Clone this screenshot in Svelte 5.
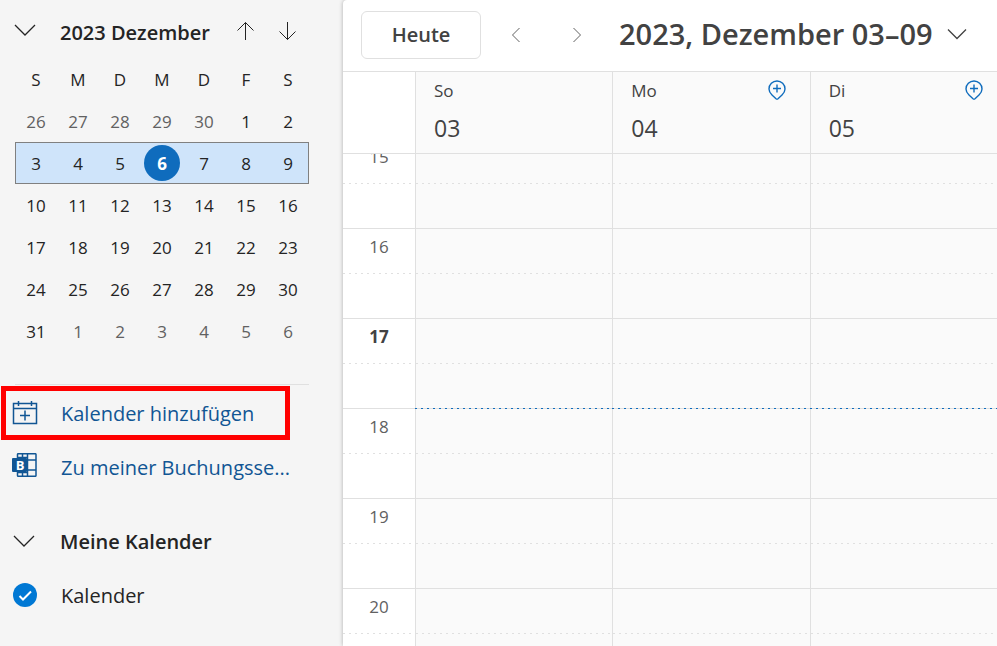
<script lang="ts">
	const weekdays = ['S', 'M', 'D', 'M', 'D', 'F', 'S'];
	const weeks = [
		[26, 27, 28, 29, 30, 1, 2],
		[3, 4, 5, 6, 7, 8, 9],
		[10, 11, 12, 13, 14, 15, 16],
		[17, 18, 19, 20, 21, 22, 23],
		[24, 25, 26, 27, 28, 29, 30],
		[31, 1, 2, 3, 4, 5, 6]
	];
	const selectedWeek = 1;
	const today = 6;

	const days = [
		{ name: 'So', date: '03', pin: false },
		{ name: 'Mo', date: '04', pin: true },
		{ name: 'Di', date: '05', pin: true }
	];
	const hours = [15, 16, 17, 18, 19, 20];
	const currentHour = 17;

	let calendarVisible = $state(true);

	function isOutside(week: number, day: number): boolean {
		return (week === 0 && day > 20) || (week === weeks.length - 1 && day < 10);
	}
</script>

{#snippet chevron()}
	<svg class="chevron" width="22" height="12" viewBox="0 0 22 12" aria-hidden="true">
		<path d="M1 1l10 10L21 1" />
	</svg>
{/snippet}

<div class="app">
	<aside class="sidebar">
		<div class="monthHeader">
			<button class="collapse" aria-label="Monat ausblenden">{@render chevron()}</button>
			<button class="monthName">2023 Dezember</button>
			<button class="step" aria-label="Vorheriger Monat">
				<svg width="18" height="20" viewBox="0 0 18 20" aria-hidden="true">
					<path d="M8.500 19V1.500M.5 9.500l8-8 8 8" />
				</svg>
			</button>
			<button class="step" aria-label="Nächster Monat">
				<svg width="18" height="20" viewBox="0 0 18 20" aria-hidden="true">
					<path d="M8.500 1v17.500M.5 10.500l8 8 8-8" />
				</svg>
			</button>
		</div>

		<table class="month">
			<thead>
				<tr>
					{#each weekdays as weekday}
						<th scope="col">{weekday}</th>
					{/each}
				</tr>
			</thead>
			<tbody>
				{#each weeks as week, w}
					<tr class:selected={w === selectedWeek}>
						{#each week as day}
							<td>
								<button
									class="day"
									class:outside={isOutside(w, day)}
									class:today={w === selectedWeek && day === today}>{day}</button
								>
							</td>
						{/each}
					</tr>
				{/each}
			</tbody>
		</table>

		<nav class="links">
			<a class="row link highlighted" href="#add">
				<svg width="26" height="24" viewBox="0 0 26 24" aria-hidden="true">
					<path d="M1.500 2.500h23v20h-23zM1.500 7.500h23M6.500 0v5M19.500 0v5M13 9.500v10M8 14.500h10" />
				</svg>
				<span>Kalender hinzufügen</span>
			</a>
			<a class="row link" href="#bookings">
				<svg class="bookings" width="26" height="24" viewBox="0 0 26 24" aria-hidden="true">
					<path
						d="M5.500 1.500q0-.8.8-.8h16.900q.8 0 .8.800v21q0 .8-.8.800H6.300q-.8 0-.8-.8zM15.500 1v22M10.500 1v5M10.500 18v5M5.500 4.500h10M5.500 19.500h10M15.500 7H24M15.500 17H24"
					/>
					<rect x="0" y="5" width="15" height="14" rx="1" />
					<text x="8" y="17" text-anchor="middle">B</text>
				</svg>
				<span>Zu meiner Buchungsse...</span>
			</a>
		</nav>

		<section class="groups">
			<button class="row group">
				{@render chevron()}
				<span>Meine Kalender</span>
			</button>
			<label class="row">
				<input type="checkbox" bind:checked={calendarVisible} />
				<svg class="check" width="24" height="24" viewBox="0 0 24 24" aria-hidden="true">
					<circle cx="12" cy="12" r="12" />
					{#if calendarVisible}
						<path d="M6.500 13l3.500 3.500 8-8" />
					{/if}
				</svg>
				<span>Kalender</span>
			</label>
		</section>
	</aside>

	<main class="calendar">
		<header class="toolbar">
			<button class="todayButton">Heute</button>
			<button class="arrow" aria-label="Vorherige Woche">
				<svg width="10" height="16" viewBox="0 0 10 16" aria-hidden="true">
					<path d="M8.500 1L1.500 8l7 7" />
				</svg>
			</button>
			<button class="arrow" aria-label="Nächste Woche">
				<svg width="10" height="16" viewBox="0 0 10 16" aria-hidden="true">
					<path d="M1.500 1l7 7-7 7" />
				</svg>
			</button>
			<button class="range">
				<span>2023, Dezember 03–09</span>
				<svg width="20" height="12" viewBox="0 0 20 12" aria-hidden="true">
					<path d="M1 1.500l9 9 9-9" />
				</svg>
			</button>
		</header>

		<div class="columns dayHeaders">
			<div></div>
			{#each days as day}
				<div class="dayHeader">
					<span class="dayName">{day.name}</span>
					{#if day.pin}
						<button class="pin" aria-label="Arbeitsort festlegen">
							<svg width="18" height="20" viewBox="0 0 18 20" aria-hidden="true">
								<path
									d="M9 1a8 8 0 0 1 8 8c0 2.500-1.200 4.300-3 6l-4 3.700q-1 .8-2 0L4 15c-1.800-1.700-3-3.500-3-6a8 8 0 0 1 8-8zM9 4.500v8M5 8.500h8"
								/>
							</svg>
						</button>
					{/if}
					<span class="dayDate">{day.date}</span>
				</div>
			{/each}
		</div>

		<div class="viewport">
			<div class="hours">
				{#each hours as hour}
					<div class="columns hour">
						<div class="label" class:current={hour === currentHour}>{hour}</div>
						{#each days as _}
							<div class="slot" class:now={hour === currentHour}></div>
						{/each}
					</div>
				{/each}
			</div>
		</div>
	</main>
</div>

<style>
	:global(body) {
		margin: 0;
		font-family: 'Segoe UI', 'Open Sans', 'Noto Sans', sans-serif;
		color: #242424;
		background: #f5f5f5;
	}

	button {
		padding: 0;
		border: 0;
		background: none;
		color: inherit;
		font: inherit;
		cursor: pointer;
	}

	svg {
		display: block;
		flex: none;
		fill: none;
		stroke: currentColor;
	}

	.app {
		display: flex;
		height: 100vh;
		overflow: hidden;
	}

	.sidebar {
		flex: none;
		box-sizing: border-box;
		width: 343px;
		padding-top: 11px;
	}

	.monthHeader {
		display: flex;
		align-items: center;
		height: 42px;
		margin: 0 34px 5px 14px;
	}

	.collapse {
		width: 46px;
		height: 42px;
		padding-bottom: 4px;
	}

	.chevron {
		stroke-width: 1.3;
	}

	.monthName {
		flex: 1;
		text-align: left;
		font-size: 20px;
		font-weight: 600;
		white-space: nowrap;
	}

	.step {
		display: grid;
		place-items: center;
		width: 42px;
		height: 42px;
		padding-bottom: 2px;
	}

	.month {
		width: 294px;
		margin-left: 15px;
		border-collapse: collapse;
		table-layout: fixed;
		font-size: 17px;
	}

	.month th,
	.month td {
		height: 42px;
		padding: 0;
		text-align: center;
		font-weight: 400;
	}

	.selected {
		background: #cfe4fa;
		outline: 1px solid #808080;
		outline-offset: -1px;
	}

	.day {
		width: 36px;
		height: 36px;
		border-radius: 50%;
	}

	.outside {
		color: #616161;
	}

	.today {
		background: #0f6cbd;
		color: #fff;
		font-weight: 700;
	}

	.links {
		margin-top: 32px;
	}

	.links::before {
		content: '';
		display: block;
		height: 1px;
		margin: 0 34px 1px 15px;
		background: #e0e0e0;
	}

	.row {
		display: flex;
		align-items: center;
		gap: 23px;
		box-sizing: border-box;
		width: 289px;
		height: 54px;
		margin-left: 1px;
		padding-left: 11px;
		font-size: 20px;
		white-space: nowrap;
	}

	.link {
		color: #115694;
		text-decoration: none;
	}

	.link svg {
		stroke-width: 1.5;
	}

	.highlighted {
		padding-left: 6px;
		border: 5px solid #ff0000;
	}

	.link .bookings {
		margin-bottom: 4px;
	}

	.bookings rect {
		fill: currentColor;
		stroke: none;
	}

	.bookings text {
		fill: #fff;
		stroke: none;
		font-size: 13px;
		font-weight: 700;
	}

	.groups {
		margin-top: 20px;
	}

	.group {
		gap: 25px;
		padding-left: 12px;
		font-weight: 600;
	}

	label.row {
		position: relative;
		gap: 24px;
		padding-left: 12px;
	}

	label input {
		position: absolute;
		width: 24px;
		height: 24px;
		margin: 0;
		opacity: 0;
	}

	.check circle {
		fill: #0078d4;
		stroke: none;
	}

	.check path {
		stroke: #fff;
		stroke-width: 2;
	}

	.calendar {
		flex: 1;
		display: flex;
		flex-direction: column;
		min-width: 0;
		overflow: hidden;
		border-top-left-radius: 4px;
		background: #fff;
		box-shadow: 0 0 4px rgba(0, 0, 0, 0.3);
		color: #424242;
	}

	.toolbar {
		display: flex;
		align-items: center;
		box-sizing: border-box;
		height: 71px;
		padding: 0 18px 2px;
	}

	.todayButton {
		width: 120px;
		height: 48px;
		margin-right: 4px;
		border: 1px solid #e0e0e0;
		border-radius: 6px;
		font-size: 20px;
		font-weight: 600;
	}

	.arrow {
		display: grid;
		place-items: center;
		width: 61px;
		height: 48px;
		color: #616161;
	}

	.range {
		display: flex;
		align-items: center;
		gap: 14px;
		margin-left: 12px;
		padding-bottom: 2px;
		font-size: 29px;
		font-weight: 600;
		white-space: nowrap;
	}

	.range svg {
		stroke-width: 1.3;
	}

	/* the last day runs on past the right edge */
	.columns {
		display: grid;
		grid-template-columns: 72px repeat(3, 1fr);
		margin-right: -10px;
	}

	.dayHeaders {
		flex: none;
		height: 81px;
		border-top: 1px solid #e0e0e0;
		border-bottom: 1px solid #e0e0e0;
	}

	.dayHeader {
		display: grid;
		grid-template-columns: 1fr auto;
		grid-template-rows: 36px 40px;
		align-items: center;
		padding: 0 24px 0 18px;
		border-left: 1px solid #e0e0e0;
		background: #fafafa;
	}

	.dayName {
		font-size: 17px;
	}

	.dayDate {
		grid-row: 2;
		font-size: 23px;
	}

	.pin {
		color: #0f6cbd;
	}

	.pin svg {
		stroke-width: 1.4;
	}

	.viewport {
		flex: 1;
		min-height: 0;
		overflow: hidden;
	}

	/* scrolled a little past the start of the first hour */
	.hours {
		margin-top: -15px;
	}

	.hour {
		height: 90px;
	}

	.label,
	.slot {
		box-sizing: border-box;
		border-bottom: 1px solid #e0e0e0;
		background: repeating-linear-gradient(90deg, #e0e0e0 0 2px, transparent 2px 6px) 0 44px / 100% 1px
			no-repeat;
	}

	.label {
		padding-top: 6px;
		text-align: center;
		font-size: 17px;
		line-height: 24px;
		color: #616161;
	}

	.current {
		font-weight: 700;
		color: #424242;
	}

	.slot {
		border-left: 1px solid #e0e0e0;
		background-color: #fafafa;
	}

	.now {
		position: relative;
	}

	.now::after {
		content: '';
		position: absolute;
		right: 0;
		bottom: -1px;
		left: -1px;
		height: 1px;
		background: repeating-linear-gradient(90deg, #0f6cbd 0 2px, transparent 2px 6px);
	}
</style>
